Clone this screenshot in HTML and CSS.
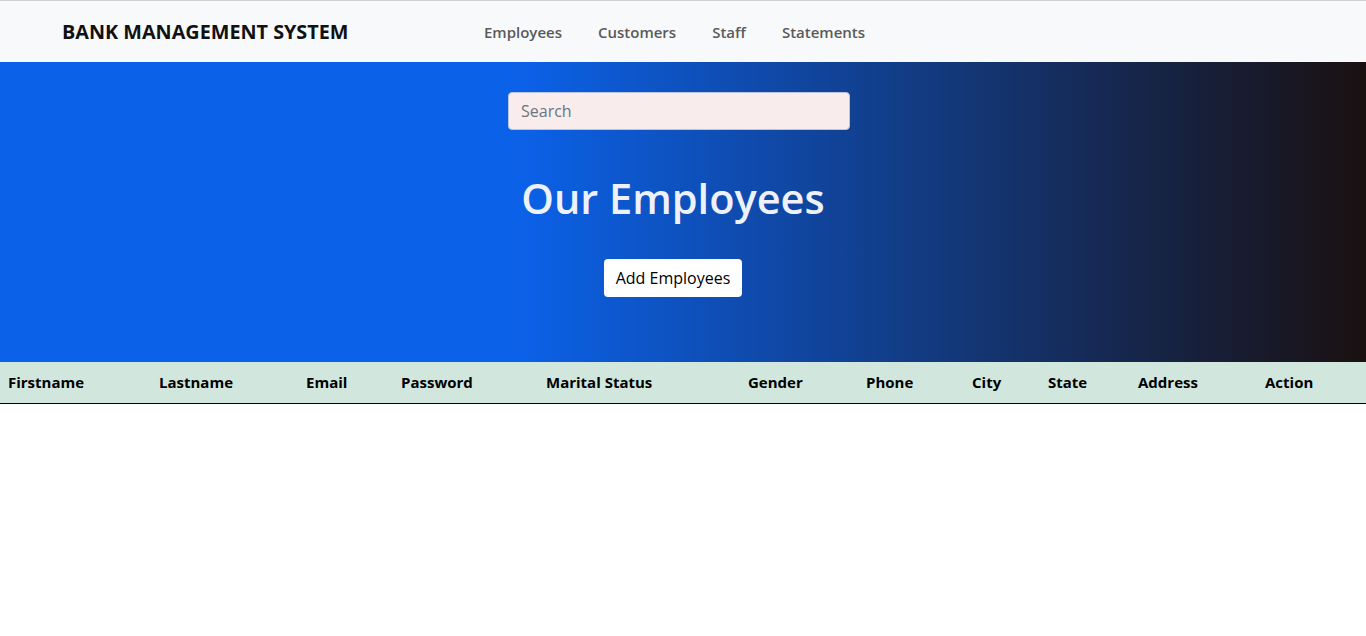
FILE: index.html
```html
<!DOCTYPE html>
<html lang="en">
<head>
<meta charset="utf-8">
<title>Bank Management System</title>
<link rel="stylesheet" href="styles.css">
</head>
<body>
<nav class="navbar">
  <a class="brand" href="#">BANK MANAGEMENT SYSTEM</a>
  <ul class="nav-links">
    <li><a href="#">Employees</a></li>
    <li><a href="#">Customers</a></li>
    <li><a href="#">Staff</a></li>
    <li><a href="#">Statements</a></li>
  </ul>
</nav>
<section class="hero">
  <input class="search" type="text" placeholder="Search">
  <h1 class="hero-title">Our Employees</h1>
  <button class="add-btn" type="button">Add Employees</button>
</section>
<table class="emp-table">
  <thead>
    <tr>
      <th class="c-first">Firstname</th>
      <th class="c-last">Lastname</th>
      <th class="c-email">Email</th>
      <th class="c-pass">Password</th>
      <th class="c-marital">Marital Status</th>
      <th class="c-gender">Gender</th>
      <th class="c-phone">Phone</th>
      <th class="c-city">City</th>
      <th class="c-state">State</th>
      <th class="c-addr">Address</th>
      <th class="c-action">Action</th>
    </tr>
  </thead>
  <tbody></tbody>
</table>
</body>
</html>
```
FILE: styles.css
```css
* { box-sizing: border-box; }
html, body { margin: 0; padding: 0; }
body {
  font-family: "Open Sans", "Noto Sans", "Liberation Sans", sans-serif;
  font-size: 16px;
  color: #212529;
  background: #fff;
  border-top: 1px solid #d2d2d2;
}
.navbar {
  height: 61px;
  background: #f8f9fa;
  display: flex;
  align-items: center;
  padding-left: 62px;
}
.brand {
  font-size: 19.8px;
  font-weight: 700;
  color: #111;
  text-decoration: none;
  width: 422px;
}
.nav-links {
  list-style: none;
  margin: 0;
  padding: 0;
  display: flex;
  gap: 36px;
}
.nav-links a {
  color: #5a5a5a;
  text-decoration: none;
  font-size: 15px;
  font-weight: 600;
}
.hero {
  height: 300px;
  background: linear-gradient(90deg, #0b61e8 0%, #0b61e8 38%, #1a1010 100%);
  display: flex;
  flex-direction: column;
  align-items: center;
  padding-top: 30px;
  padding-right: 20px;
}
.search {
  width: 342px;
  height: 38px;
  margin-left: 12px;
  background: #f8ecec;
  border: 1px solid #b9c3dc;
  border-radius: 4px;
  padding: 0 12px;
  font-family: inherit;
  font-size: 16px;
  color: #333;
  outline: none;
}
.search::placeholder { color: #6c757d; }
.hero-title {
  margin: 38px 0 0;
  font-size: 41.5px;
  font-weight: 600;
  line-height: 60px;
  color: #eef1f8;
}
.add-btn {
  margin-top: 31px;
  width: 138px;
  height: 38px;
  background: #fff;
  border: none;
  border-radius: 4px;
  font-family: inherit;
  font-size: 16px;
  color: #000;
  padding: 0;
}
.emp-table {
  width: 100%;
  border-collapse: collapse;
  table-layout: fixed;
}
.emp-table th {
  background: #d1e7dd;
  text-align: left;
  font-weight: 700;
  font-size: 15px;
  color: #000;
  height: 41px;
  padding: 0 8px;
  border-bottom: 1px solid #000;
  white-space: nowrap;
}
.c-first { width: 151px; }
.c-last { width: 147px; }
.c-email { width: 95px; }
.c-pass { width: 145px; }
.c-marital { width: 202px; }
.c-gender { width: 118px; }
.c-phone { width: 106px; }
.c-city { width: 76px; }
.c-state { width: 90px; }
.c-addr { width: 127px; }
.c-action { width: auto; }
```
